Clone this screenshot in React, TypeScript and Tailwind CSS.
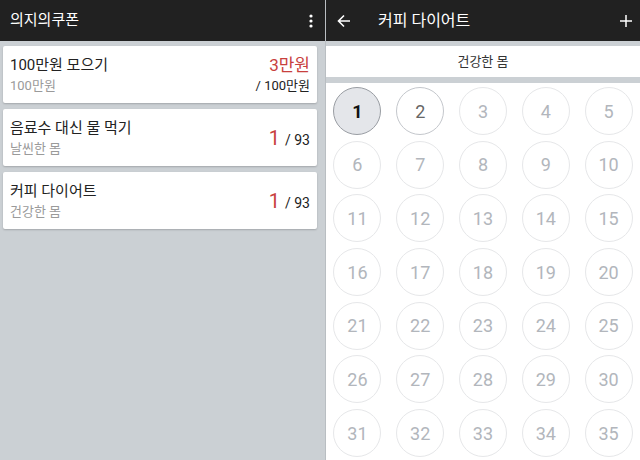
import React from "react";

const font = { fontFamily: "Roboto, 'Noto Sans CJK KR', sans-serif" };

function Card({ title, sub, children }: { title: string; sub: string; children: React.ReactNode }) {
  return (
    <div className="mx-[3px] h-[57px] bg-white rounded-[2px] shadow-[0_1px_2px_rgba(0,0,0,0.2)] flex items-center justify-between pl-[7px] pr-[7px]">
      <div className="flex flex-col">
        <div className="text-[15px] leading-[20px] text-[#222]">{title}</div>
        <div className="text-[13px] leading-[18px] text-[#9a9a9a] mt-[2px]">{sub}</div>
      </div>
      {children}
    </div>
  );
}

export default function App() {
  const nums = Array.from({ length: 35 }, (_, i) => i + 1);
  return (
    <div className="w-[640px] h-[460px] flex overflow-hidden" style={font}>
      <div className="w-[326px] h-full bg-[#cbd0d4] flex flex-col border-r border-[#b9bec2]">
        <div className="h-[41px] bg-[#212121] flex items-center justify-between pl-[10px] pr-[12px]">
          <span className="text-white text-[15px]">의지의쿠폰</span>
          <svg width="4" height="14" viewBox="0 0 4 14">
            <circle cx="2" cy="2" r="1.6" fill="#fff" />
            <circle cx="2" cy="7" r="1.6" fill="#fff" />
            <circle cx="2" cy="12" r="1.6" fill="#fff" />
          </svg>
        </div>
        <div className="flex flex-col gap-[6px] pt-[5px] pr-[5px]">
          <Card title="100만원 모으기" sub="100만원">
            <div className="flex flex-col items-end">
              <span className="text-[17px] leading-[20px] text-[#c8403e]">3만원</span>
              <span className="text-[13px] leading-[18px] text-[#222] mt-[2px]">/ 100만원</span>
            </div>
          </Card>
          <Card title="음료수 대신 물 먹기" sub="날씬한 몸">
            <div className="flex items-baseline gap-[5px]">
              <span className="text-[20px] text-[#c8403e]">1</span>
              <span className="text-[14px] text-[#222]">/ 93</span>
            </div>
          </Card>
          <Card title="커피 다이어트" sub="건강한 몸">
            <div className="flex items-baseline gap-[5px]">
              <span className="text-[20px] text-[#c8403e]">1</span>
              <span className="text-[14px] text-[#222]">/ 93</span>
            </div>
          </Card>
        </div>
      </div>
      <div className="flex-1 h-full bg-[#cbd0d4] flex flex-col">
        <div className="h-[41px] bg-[#212121] flex items-center pl-[11px] pr-[8px]">
          <svg width="14" height="14" viewBox="0 0 14 14" fill="none" stroke="#fff" strokeWidth="1.6">
            <path d="M13 7H2M7 1.5L1.5 7L7 12.5" />
          </svg>
          <span className="text-white text-[16px] ml-[27px]">커피 다이어트</span>
          <div className="flex-1" />
          <svg width="12" height="12" viewBox="0 0 12 12" fill="none" stroke="#fff" strokeWidth="1.5">
            <path d="M6 0V12M0 6H12" />
          </svg>
        </div>
        <div className="mt-[5px] h-[31px] bg-white flex items-center justify-center text-[13px] text-[#333]">
          건강한 몸
        </div>
        <div className="mt-[6px] flex-1 bg-white grid grid-cols-5 content-start gap-y-[5.7px] pt-[4px]">
          {nums.map((n) => {
            const cls =
              n === 1
                ? "bg-[#e4e6ea] border-[#999da3] text-[#111] font-bold"
                : n === 2
                ? "bg-white border-[#c4c7cc] text-[#666]"
                : "bg-white border-[#e6e7e9] text-[#b2b6bc]";
            return (
              <div key={n} className="flex justify-center">
                <div className={`w-[48px] h-[48px] rounded-full border flex items-center justify-center text-[18px] ${cls}`}>
                  {n}
                </div>
              </div>
            );
          })}
        </div>
      </div>
    </div>
  );
}
